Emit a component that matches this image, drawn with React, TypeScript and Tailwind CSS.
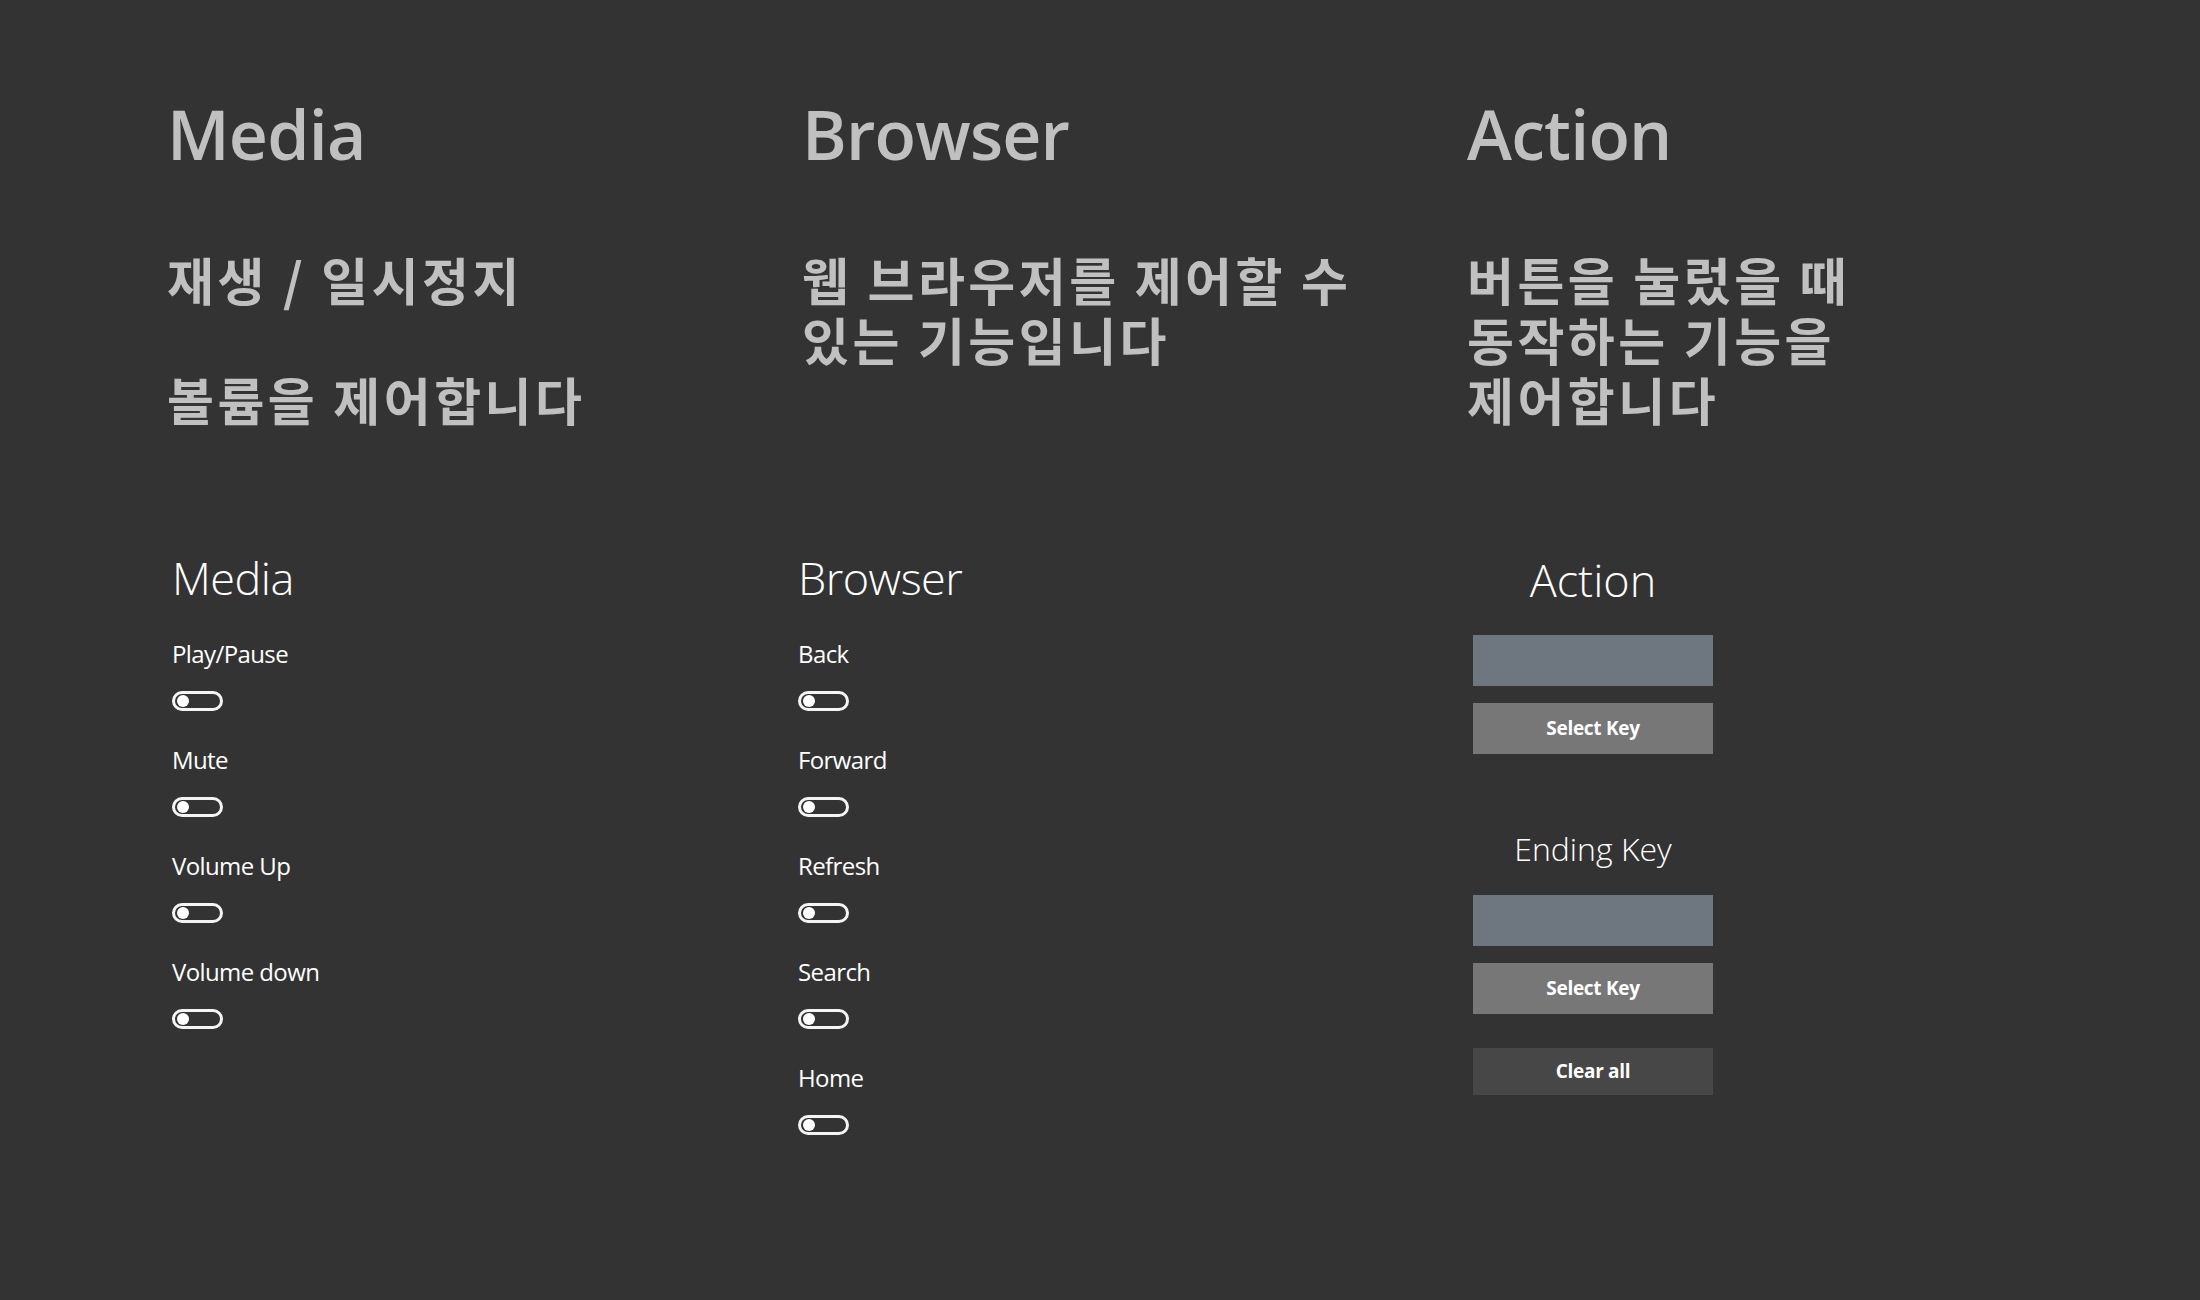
import React from "react";

type Intro = {
  title: string;
  lines: string[][];
};

const intros: Intro[] = [
  { title: "Media", lines: [["재생 / 일시정지"], ["볼륨을 제어합니다"]] },
  { title: "Browser", lines: [["웹 브라우저를 제어할 수", "있는 기능입니다"]] },
  { title: "Action", lines: [["버튼을 눌렀을 때", "동작하는 기능을", "제어합니다"]] },
];

const mediaToggles = ["Play/Pause", "Mute", "Volume Up", "Volume down"];
const browserToggles = ["Back", "Forward", "Refresh", "Search", "Home"];

const Toggle = () => (
  <div className="mt-[21px] flex h-5 w-[51px] items-center rounded-full border-[3px] border-[#f4f4f4] pl-[2px]">
    <div className="h-3 w-3 rounded-full bg-white" />
  </div>
);

const ToggleList = ({ title, items }: { title: string; items: string[] }) => (
  <div className="flex flex-col">
    <h2 className="h-14 text-[45px] leading-[56px] font-light tracking-[-0.5px] text-white">{title}</h2>
    <div className="mt-8 flex flex-col gap-[33px]">
      {items.map((item) => (
        <div key={item} className="flex flex-col">
          <span className="h-8 text-[24px] leading-8 tracking-[-0.6px] text-white">{item}</span>
          <Toggle />
        </div>
      ))}
    </div>
  </div>
);

const KeyBox = ({ first }: { first?: boolean }) => (
  <>
    <div className={`${first ? "mt-[27px]" : "mt-[26px]"} h-[51px] w-[240px] bg-[#6e7780]`} />
    <button className="mt-[17px] h-[51px] w-[240px] bg-[#777777] text-[19px] font-bold tracking-[-0.3px] text-white">
      Select Key
    </button>
  </>
);

export default function App() {
  return (
    <div
      className="min-h-[1300px] w-full bg-[#333333]"
      style={{ fontFamily: '"Open Sans", "Noto Sans", sans-serif' }}
    >
      <div className="grid grid-cols-[635px_665px_auto] pt-[100px] pl-[167px]">
        {intros.map((intro) => (
          <div key={intro.title} className="flex flex-col">
            <h1 className="h-[68px] text-[68px] leading-[68px] font-semibold tracking-[-0.8px] text-[#c0c0c0]">
              {intro.title}
            </h1>
            <div
              className="mt-[81px] flex flex-col gap-[60px] text-[51px] leading-[60px] font-bold tracking-[3.5px] whitespace-nowrap text-[#c0c0c0]"
              style={{ fontFamily: '"Noto Sans CJK KR", sans-serif' }}
            >
              {intro.lines.map((para, i) => (
                <p key={i}>
                  {para.map((line, j) => (
                    <React.Fragment key={j}>
                      {j > 0 && <br />}
                      {line}
                    </React.Fragment>
                  ))}
                </p>
              ))}
            </div>
          </div>
        ))}
      </div>

      <div className="mt-[121px] grid grid-cols-[628px_673px_auto] pl-[172px]">
        <ToggleList title="Media" items={mediaToggles} />
        <div className="-ml-[2px]">
          <ToggleList title="Browser" items={browserToggles} />
        </div>
        <div className="mt-[2px] flex w-[240px] flex-col items-center">
          <h2 className="h-14 text-[45px] leading-[56px] font-light text-white">Action</h2>
          <KeyBox first />
          <h3 className="mt-[75px] h-10 text-[32px] leading-10 font-light text-white">Ending Key</h3>
          <KeyBox />
          <button className="mt-[34px] h-[47px] w-[240px] bg-[#474747] text-[19px] font-bold tracking-[-0.3px] text-white">
            Clear all
          </button>
        </div>
      </div>
    </div>
  );
}
